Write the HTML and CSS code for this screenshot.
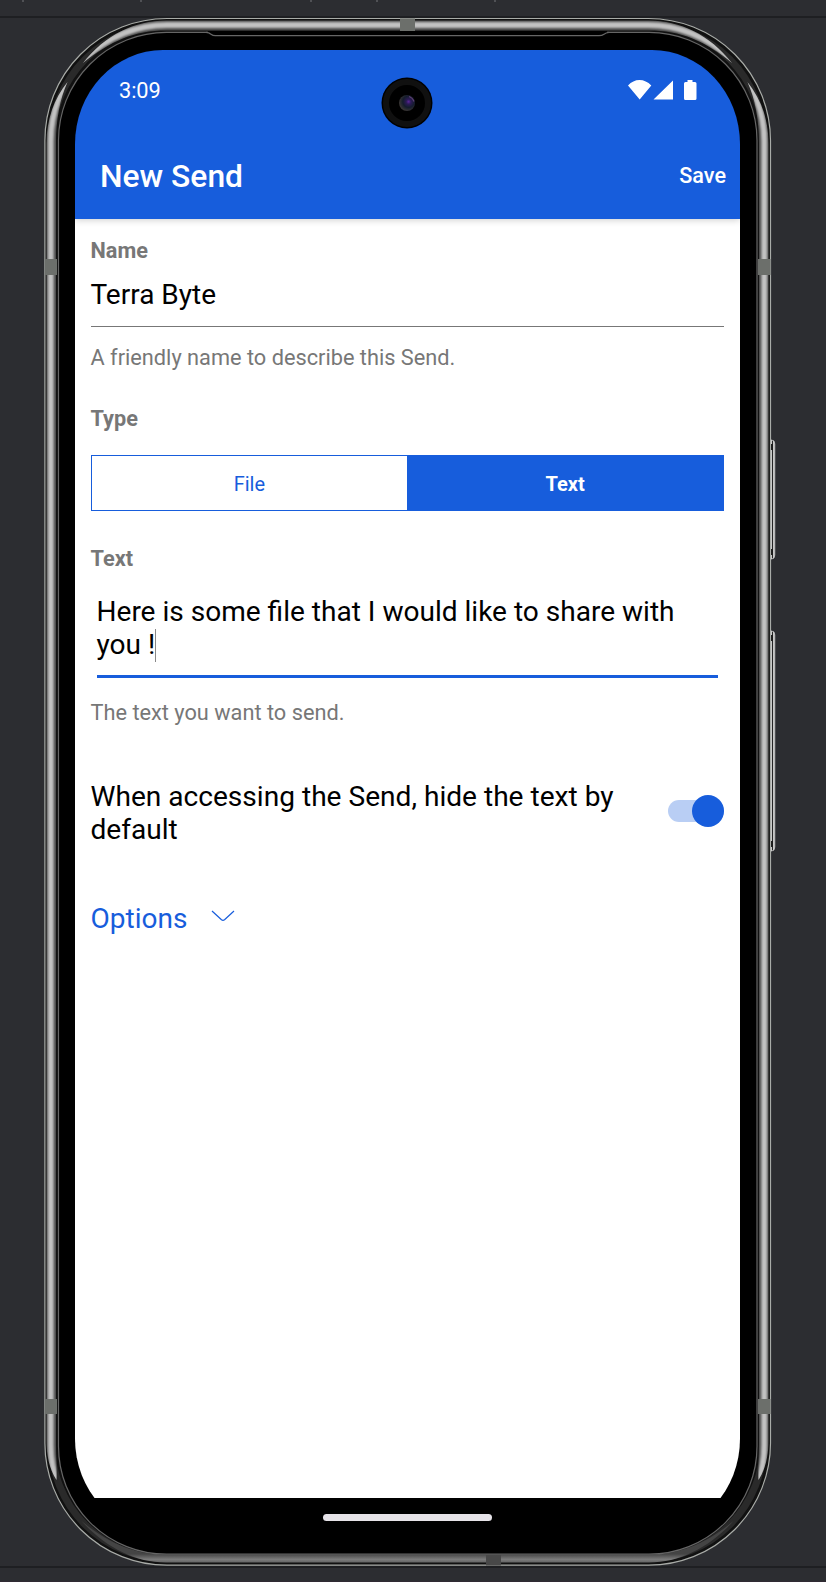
FILE: index.html
```html
<!DOCTYPE html>
<html lang="en">
<head>
<meta charset="utf-8">
<title>New Send</title>
<link rel="stylesheet" href="styles.css">
</head>
<body>
<main class="stage">
<svg class="device" viewBox="0 0 826 1582" aria-hidden="true">
  <defs>
    <clipPath id="band">
      <path d="M83 63C105 35 135 20.500 166 20.500H649C680 20.500 710 35 732 63C706 41 680 30.500 649 30.500H166C135 30.500 110 41 83 63Z"/>
      <path d="M67.500 82C54 99 46.500 119 46.500 144V1440C46.500 1455 49 1468 56.500 1480C57 1466 56 1455 56 1440V144C56 119 60 99 67.500 82Z"/>
      <path d="M747.500 82C761 99 768.500 119 768.500 144V1440C768.500 1455 766 1468 758.500 1480C758 1466 759 1455 759 1440V144C759 119 755 99 747.500 82Z"/>
    </clipPath>
    <filter id="soft" filterUnits="userSpaceOnUse" x="0" y="0" width="826" height="1582"><feGaussianBlur stdDeviation="1"/></filter>
    <linearGradient id="edgeB" gradientUnits="userSpaceOnUse" x1="0" x2="0" y1="1554" y2="1563"><stop offset="0" stop-color="#444"/><stop offset=".6" stop-color="#7c7c7c"/><stop offset="1" stop-color="#606060"/></linearGradient>
    <linearGradient id="key" x1="0" x2="1" y1="0" y2="0"><stop offset="0" stop-color="#999"/><stop offset=".45" stop-color="#ccc"/><stop offset=".6" stop-color="#222"/><stop offset=".8" stop-color="#ddd"/><stop offset="1" stop-color="#aaa"/></linearGradient>
  </defs>
  <path fill="#1e1f22" d="M0 16h826v2H0zM0 1566h826v2H0z"/>
  <path fill="#302a33" d="M0 1581h826v1H0z"/>
  <path fill="#505155" d="M22 0h2v2h-2zM140 0h2v2h-2zM310 0h2v2h-2zM376 0h2v2h-2zM494 0h2v2h-2z"/>
  <g fill="url(#key)" stroke="#d4d4d4" stroke-width=".7">
    <path d="M769 440h2.500q3.300 0 3.300 4v111q0 4-3.300 4H769z"/>
    <path d="M769 631h2.500q3.300 0 3.300 4v212q0 4-3.300 4H769z"/>
  </g>
  <path fill="#111" d="M770 444h2.500v6H770zM770 549h2.500v6H770zM770 635h2.500v6H770zM770 841h2.500v6H770z"/>
  <rect x="44.900" y="18.500" width="725.600" height="1546.700" rx="122" fill="#111" stroke="#a9aca8" stroke-width="1.200"/>
  <rect x="51.500" y="25.500" width="712" height="1533" rx="115" fill="none" stroke="#2a2a2a" stroke-width="7"/>
  <g clip-path="url(#band)">
    <rect x="44" y="18" width="727" height="1547" fill="#484848"/>
    <rect x="50.700" y="25" width="713.600" height="1536" rx="116" fill="none" stroke="#c2c2c2" stroke-width="6" filter="url(#soft)"/>
  </g>
  <path fill="url(#edgeB)" d="M81.500 1521C105 1547 135 1562.500 166 1562.500H649C680 1562.500 710 1547 733.500 1521C706 1544 680 1554.500 649 1554.500H166C135 1554.500 109 1544 81.500 1521Z"/>
  <g fill="#6c6f6b"><path d="M45 259h12v16H45zM758 259h12.500v16H758zM45 1399h12v15H45zM758 1399h12.500v15H758zM400 18.500h15v12.500h-15z"/><path fill="#484848" d="M486 1555h15v10.500h-15z"/></g>
  <rect x="58.500" y="32.400" width="698.500" height="1521.800" rx="108" fill="#000" stroke="#666" stroke-width="1.200"/>
  <path fill="#000" d="M208 31H607V35H208z"/>
  <path fill="none" stroke="#666" stroke-width="1.200" d="M206 32.400Q209 32.500 211 34.200T216 35.700H599Q602 35.700 604 34.200T609 32.400"/>
</svg>
<section class="screen">
  <header class="top">
    <div class="status">
      <span class="clock">3:09</span>
      <svg class="signals" viewBox="0 0 70 22" aria-hidden="true"><path fill="#fff" d="M0 6.500Q5 1 11.500 1T23.300 6.500L11.700 20.500zM25.500 20.500L45 1.500V20.500zM56 4.500q0-1.500 1.500-1.500H59.500V1h5V3H67q1.500 0 1.500 1.500V19.500q0 1.500-1.500 1.500H57.500q-1.500 0-1.500-1.500z"/></svg>
    </div>
    <div class="titlebar"><h1 class="title">New Send</h1><span class="save">Save</span></div>
    <svg class="camera" viewBox="0 0 52 52" aria-hidden="true">
      <defs><radialGradient id="lens" cx=".6" cy=".42" r=".6"><stop offset="0" stop-color="#5a2599"/><stop offset=".25" stop-color="#2b1a55"/><stop offset=".6" stop-color="#141c2c"/><stop offset="1" stop-color="#3a3635"/></radialGradient></defs>
      <circle cx="26" cy="26" r="25.500" fill="#000"/><circle cx="26" cy="26" r="21" fill="none" stroke="#101010" stroke-width="6"/><circle cx="26" cy="26" r="8" fill="url(#lens)"/><path d="M28 19.500q4 1.500 5 5" fill="none" stroke="#5b3f72" stroke-width="1.200"/>
    </svg>
  </header>
  <div class="form">
    <div class="label name-label">Name</div>
    <div class="input">Terra Byte</div>
    <p class="hint">A friendly name to describe this Send.</p>
    <div class="label type-label">Type</div>
    <div class="segments"><span class="segment">File</span><span class="segment active">Text</span></div>
    <div class="label text-label">Text</div>
    <div class="textarea">Here is some file that I would like to share with<br>you !<i class="caret"></i></div>
    <p class="hint">The text you want to send.</p>
    <div class="toggle-row"><span class="toggle-text">When accessing the Send, hide the text by<br>default</span><span class="switch"><span class="knob"></span></span></div>
    <div class="options"><span>Options</span><svg class="chevron" viewBox="0 0 24 12" aria-hidden="true"><path d="M1 1L10.500 9.800Q12 11 13.500 9.800L23 1" fill="none" stroke="#175ddc" stroke-width="1.200"/></svg></div>
  </div>
  <footer class="nav"><span class="handle"></span></footer>
</section>
</main>
</body>
</html>
```
FILE: styles.css
```css
body { margin: 0; background: #2c2d31; font-family: Roboto, sans-serif; }
.stage { position: relative; box-sizing: border-box; width: 826px; height: 1582px; padding: 50px 86px 0 75px; overflow: hidden; }
.device { position: absolute; left: 0; top: 0; width: 826px; height: 1582px; }
.screen { position: relative; display: flex; flex-direction: column; width: 665px; height: 1483px; border-radius: 88px / 94px; overflow: hidden; background: #000; }
.top { position: relative; z-index: 1; box-sizing: border-box; height: 168.500px; background: #175ddc; color: #fff; box-shadow: 0 1px 7px rgba(0, 0, 0, .2); }
.status { display: flex; align-items: center; justify-content: space-between; height: 80px; padding: 0 42px 0 44px; }
.clock { font-size: 21.8px; letter-spacing: -.1px; }
.signals { width: 70px; height: 22px; }
.titlebar { display: flex; align-items: center; justify-content: space-between; height: 90px; padding: 0 14px 0 25px; }
.title { margin: 0; padding-top: 2px; font-size: 31.8px; font-weight: 500; }
.save { font-size: 21.6px; font-weight: 500; }
.camera { position: absolute; left: 306px; top: 27px; width: 52px; height: 52px; }
.form { flex: 1; padding: 17px 16px 0 15.500px; background: #fff; }
.label { font-size: 21.7px; font-weight: 700; line-height: 30px; color: #777; }
.input { box-sizing: border-box; height: 61px; padding-top: 13.500px; border-bottom: 1px solid #777; font-size: 28px; line-height: 32px; color: #000; }
.hint { margin: 16px 0 0; font-size: 21.75px; line-height: 30px; color: #777; }
.type-label { margin-top: 31px; }
.segments { display: flex; box-sizing: border-box; height: 56px; margin-top: 21.500px; border: 1.500px solid #175ddc; }
.segment { display: flex; flex: 1; align-items: center; justify-content: center; padding-top: 2px; font-size: 20px; color: #175ddc; }
.segment.active { background: #175ddc; color: #fff; font-weight: 700; }
.text-label { margin-top: 32.500px; }
.textarea { box-sizing: border-box; height: 83px; margin: 21px 6px 0; border-bottom: 3px solid #175ddc; font-size: 28.05px; line-height: 33px; color: #000; white-space: nowrap; }
.caret { display: inline-block; width: 1px; height: 33px; margin-left: 0; vertical-align: -8px; background: #888; }
.textarea + .hint { margin-top: 20px; }
.toggle-row { display: flex; align-items: flex-start; justify-content: space-between; height: 66px; margin-top: 52px; }
.toggle-text { font-size: 28.1px; line-height: 33px; color: #000; white-space: nowrap; }
.switch { display: flex; align-items: center; justify-content: flex-end; width: 56px; height: 22px; margin-top: 20px; border-radius: 11px; background: #b9cef4; }
.knob { flex: none; width: 32px; height: 32px; border-radius: 50%; background: #175ddc; }
.options { display: flex; align-items: center; gap: 24px; height: 34px; margin-top: 56px; font-size: 28px; color: #175ddc; }
.chevron { width: 24px; height: 12px; margin-top: -5px; }
.nav { display: flex; justify-content: center; box-sizing: border-box; height: 35px; padding-top: 16px; background: #000; }
.handle { width: 169px; height: 6.500px; border-radius: 4px; background: #e6e3e8; }
```
